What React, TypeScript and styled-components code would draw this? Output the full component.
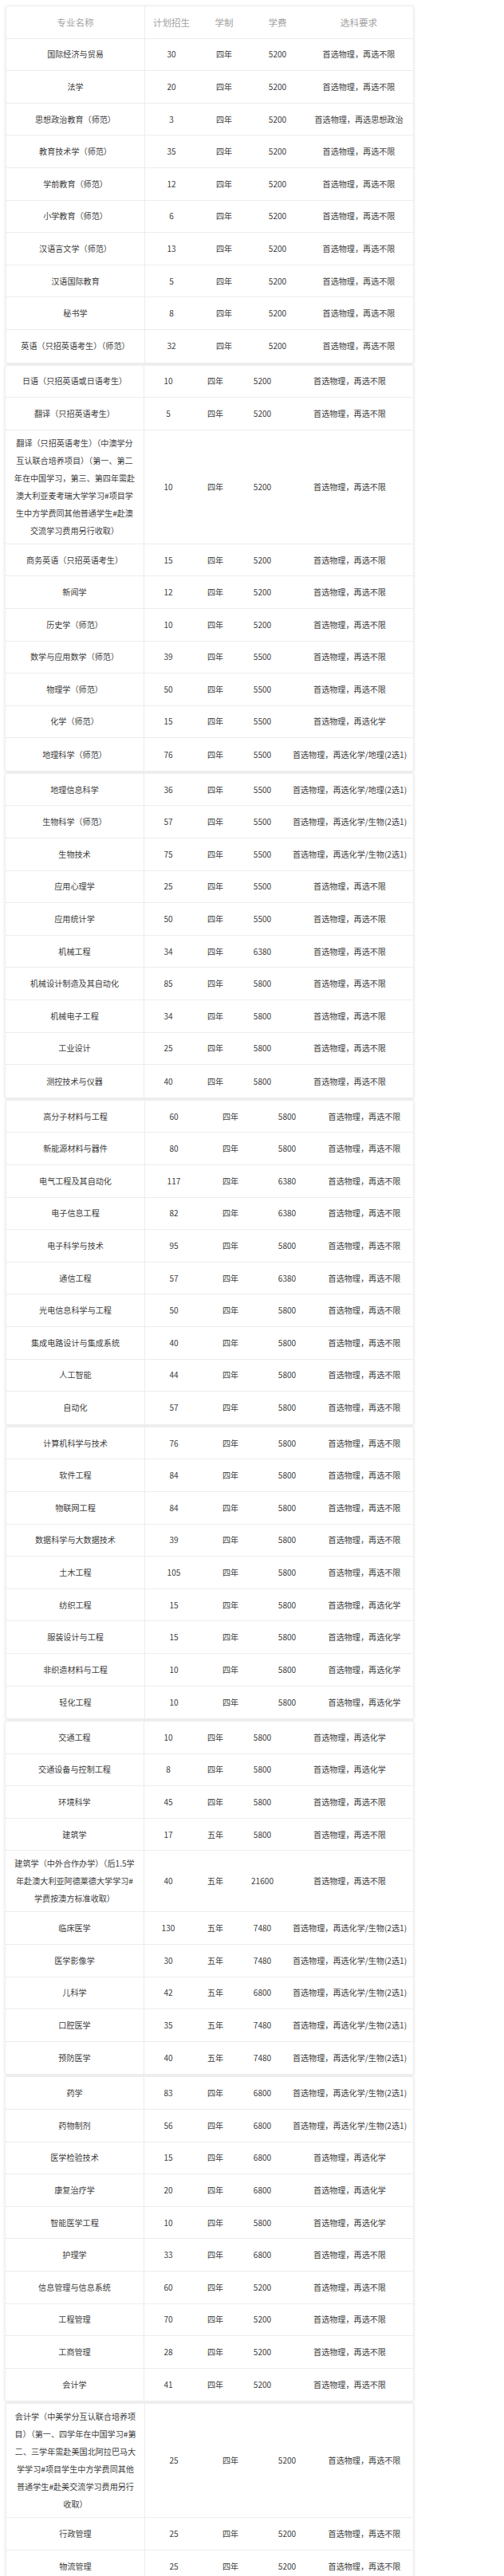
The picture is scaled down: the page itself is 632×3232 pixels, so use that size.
import React from "react";
import styled, { createGlobalStyle } from "styled-components";

const GlobalStyle = createGlobalStyle`
  html, body {
    margin: 0;
    padding: 0;
    background: #ffffff;
  }
  body {
    font-family: "Noto Sans CJK SC", "Noto Sans", "Liberation Sans", sans-serif;
    color: #404040;
  }
`;

type Layout = "A" | "B" | "C";

// column widths for each stitched table piece (they were cut from different screenshots)
const layouts: Record<Layout, { left: number; cols: string }> = {
  A: { left: 7, cols: "174px 66px 66px 68px 136px" },
  B: { left: 6, cols: "174px 60px 58px 60px 159px" },
  C: { left: 7, cols: "174px 72px 70px 72px 122px" },
};

const Page = styled.div`
  display: flex;
  flex-direction: column;
  gap: 2px;
  padding: 7px 0 10px;
`;

const Card = styled.div<{ $left: number }>`
  margin-left: ${(p) => p.$left}px;
  width: max-content;
  background: #fff;
  border: 1px solid #eeeeee;
  border-radius: 2px;
  box-shadow: 0 1px 4px rgba(0, 0, 0, 0.1);
`;

const Row = styled.div<{ $cols: string }>`
  display: grid;
  grid-template-columns: ${(p) => p.$cols};
  min-height: 40.6px;
  box-sizing: border-box;
  border-bottom: 1px solid #ededed;

  &:last-child {
    border-bottom: none;
  }
`;

const Cell = styled.div<{ $head?: boolean }>`
  display: flex;
  align-items: center;
  justify-content: center;
  text-align: center;
  padding: 5px 4px;
  font-size: ${(p) => (p.$head ? "11.6px" : "10.1px")};
  line-height: 22px;
  color: ${(p) => (p.$head ? "#a2a2a2" : "#404040")};
`;

const NameCell = styled(Cell)`
  padding: 5px 9px;
  border-right: 1px solid #ececec;
`;

const BX = "首选物理，再选不限";
const HX = "首选物理，再选化学";
const CD = "首选物理，再选化学/地理(2选1)";
const CS = "首选物理，再选化学/生物(2选1)";

type Item = [string, string, string, string, string];

const sections: { layout: Layout; header?: boolean; rows: Item[] }[] = [
  {
    layout: "A",
    header: true,
    rows: [
      ["国际经济与贸易", "30", "四年", "5200", BX],
      ["法学", "20", "四年", "5200", BX],
      ["思想政治教育（师范）", "3", "四年", "5200", "首选物理，再选思想政治"],
      ["教育技术学（师范）", "35", "四年", "5200", BX],
      ["学前教育（师范）", "12", "四年", "5200", BX],
      ["小学教育（师范）", "6", "四年", "5200", BX],
      ["汉语言文学（师范）", "13", "四年", "5200", BX],
      ["汉语国际教育", "5", "四年", "5200", BX],
      ["秘书学", "8", "四年", "5200", BX],
      ["英语（只招英语考生）（师范）", "32", "四年", "5200", BX],
    ],
  },
  {
    layout: "B",
    rows: [
      ["日语（只招英语或日语考生）", "10", "四年", "5200", BX],
      ["翻译（只招英语考生）", "5", "四年", "5200", BX],
      [
        "翻译（只招英语考生）（中澳学分互认联合培养项目）（第一、第二年在中国学习，第三、第四年需赴澳大利亚麦考瑞大学学习#项目学生中方学费同其他普通学生#赴澳交流学习费用另行收取）",
        "10",
        "四年",
        "5200",
        BX,
      ],
      ["商务英语（只招英语考生）", "15", "四年", "5200", BX],
      ["新闻学", "12", "四年", "5200", BX],
      ["历史学（师范）", "10", "四年", "5200", BX],
      ["数学与应用数学（师范）", "39", "四年", "5500", BX],
      ["物理学（师范）", "50", "四年", "5500", BX],
      ["化学（师范）", "15", "四年", "5500", HX],
      ["地理科学（师范）", "76", "四年", "5500", CD],
    ],
  },
  {
    layout: "B",
    rows: [
      ["地理信息科学", "36", "四年", "5500", CD],
      ["生物科学（师范）", "57", "四年", "5500", CS],
      ["生物技术", "75", "四年", "5500", CS],
      ["应用心理学", "25", "四年", "5500", BX],
      ["应用统计学", "50", "四年", "5500", BX],
      ["机械工程", "34", "四年", "6380", BX],
      ["机械设计制造及其自动化", "85", "四年", "5800", BX],
      ["机械电子工程", "34", "四年", "5800", BX],
      ["工业设计", "25", "四年", "5800", BX],
      ["测控技术与仪器", "40", "四年", "5800", BX],
    ],
  },
  {
    layout: "C",
    rows: [
      ["高分子材料与工程", "60", "四年", "5800", BX],
      ["新能源材料与器件", "80", "四年", "5800", BX],
      ["电气工程及其自动化", "117", "四年", "6380", BX],
      ["电子信息工程", "82", "四年", "6380", BX],
      ["电子科学与技术", "95", "四年", "5800", BX],
      ["通信工程", "57", "四年", "6380", BX],
      ["光电信息科学与工程", "50", "四年", "5800", BX],
      ["集成电路设计与集成系统", "40", "四年", "5800", BX],
      ["人工智能", "44", "四年", "5800", BX],
      ["自动化", "57", "四年", "5800", BX],
    ],
  },
  {
    layout: "C",
    rows: [
      ["计算机科学与技术", "76", "四年", "5800", BX],
      ["软件工程", "84", "四年", "5800", BX],
      ["物联网工程", "84", "四年", "5800", BX],
      ["数据科学与大数据技术", "39", "四年", "5800", BX],
      ["土木工程", "105", "四年", "5800", BX],
      ["纺织工程", "15", "四年", "5800", HX],
      ["服装设计与工程", "15", "四年", "5800", HX],
      ["非织造材料与工程", "10", "四年", "5800", HX],
      ["轻化工程", "10", "四年", "5800", HX],
    ],
  },
  {
    layout: "B",
    rows: [
      ["交通工程", "10", "四年", "5800", HX],
      ["交通设备与控制工程", "8", "四年", "5800", HX],
      ["环境科学", "45", "四年", "5800", BX],
      ["建筑学", "17", "五年", "5800", BX],
      [
        "建筑学（中外合作办学）（后1.5学年赴澳大利亚阿德莱德大学学习#学费按澳方标准收取）",
        "40",
        "五年",
        "21600",
        BX,
      ],
      ["临床医学", "130", "五年", "7480", CS],
      ["医学影像学", "30", "五年", "7480", CS],
      ["儿科学", "42", "五年", "6800", CS],
      ["口腔医学", "35", "五年", "7480", CS],
      ["预防医学", "40", "五年", "7480", CS],
    ],
  },
  {
    layout: "B",
    rows: [
      ["药学", "83", "四年", "6800", CS],
      ["药物制剂", "56", "四年", "6800", CS],
      ["医学检验技术", "15", "四年", "6800", HX],
      ["康复治疗学", "20", "四年", "6800", HX],
      ["智能医学工程", "10", "四年", "5800", HX],
      ["护理学", "33", "四年", "6800", BX],
      ["信息管理与信息系统", "60", "四年", "5200", BX],
      ["工程管理", "70", "四年", "5200", BX],
      ["工商管理", "28", "四年", "5200", BX],
      ["会计学", "41", "四年", "5200", BX],
    ],
  },
  {
    layout: "C",
    rows: [
      [
        "会计学（中美学分互认联合培养项目）（第一、四学年在中国学习#第二、三学年需赴美国北阿拉巴马大学学习#项目学生中方学费同其他普通学生#赴美交流学习费用另行收取）",
        "25",
        "四年",
        "5200",
        BX,
      ],
      ["行政管理", "25", "四年", "5200", BX],
      ["物流管理", "25", "四年", "5200", BX],
    ],
  },
];

const headers = ["专业名称", "计划招生", "学制", "学费", "选科要求"];

const App: React.FC = () => {
  return (
    <>
      <GlobalStyle />
      <Page>
        {sections.map((sec, si) => {
          const lay = layouts[sec.layout];
          return (
            <Card key={si} $left={lay.left}>
              {sec.header && (
                <Row $cols={lay.cols}>
                  <NameCell $head>{headers[0]}</NameCell>
                  {headers.slice(1).map((h) => (
                    <Cell $head key={h}>
                      {h}
                    </Cell>
                  ))}
                </Row>
              )}
              {sec.rows.map((r, ri) => (
                <Row $cols={lay.cols} key={ri}>
                  <NameCell>{r[0]}</NameCell>
                  <Cell>{r[1]}</Cell>
                  <Cell>{r[2]}</Cell>
                  <Cell>{r[3]}</Cell>
                  <Cell>{r[4]}</Cell>
                </Row>
              ))}
            </Card>
          );
        })}
      </Page>
    </>
  );
};

export default App;
